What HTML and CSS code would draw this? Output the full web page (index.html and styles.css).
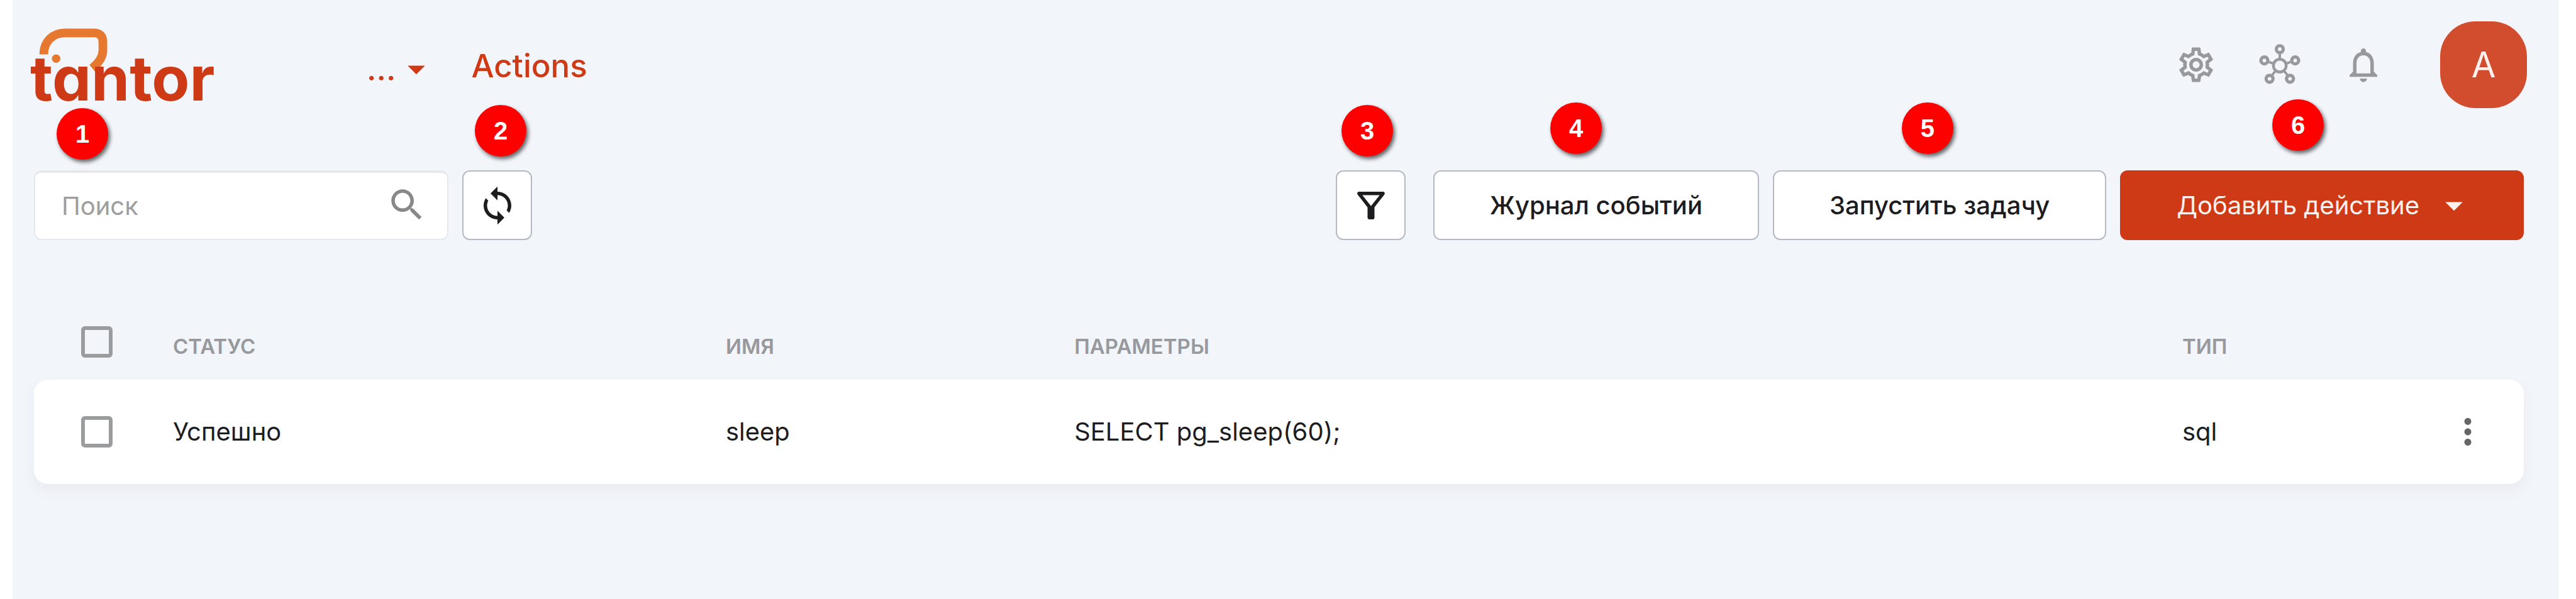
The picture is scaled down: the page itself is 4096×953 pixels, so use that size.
FILE: index.html
```html
<!DOCTYPE html>
<html lang="ru">
<head>
<meta charset="utf-8">
<meta name="viewport" content="width=device-width, initial-scale=1">
<title>Actions</title>
<link rel="stylesheet" href="styles.css">
</head>
<body>
<div class="app">
  <header class="header">
    <a class="logo" href="#" aria-label="tantor">
      <svg class="logo-art" viewBox="160 143 944 379" aria-hidden="true">
        <path class="logo-head" d="M227 278C227 212 272 167 338 167H488Q533 168 533 214V258C533 295 512 322 478 350"/>
        <circle class="logo-eye" cx="291" cy="300" r="22"/>
        <text class="logo-word" x="157" y="517">tantor</text>
      </svg>
    </a>
    <nav class="crumbs">
      <button class="crumb-menu" type="button" aria-label="Открыть путь">
        <span>...</span>
        <svg class="icon" viewBox="0 0 24 24"><path d="m7 10 5 5 5-5z"/></svg>
      </button>
      <a class="crumb" href="#">Actions</a>
    </nav>
    <div class="tools">
      <button class="tool" type="button" aria-label="Настройки">
        <svg class="icon" viewBox="0 0 24 24"><path d="M19.43 12.98c.04-.32.07-.64.07-.98s-.03-.66-.07-.98l2.11-1.65c.19-.15.24-.42.12-.64l-2-3.46c-.09-.16-.26-.25-.44-.25-.06 0-.12.01-.17.03l-2.49 1c-.52-.4-1.08-.73-1.69-.98l-.38-2.65C14.46 2.18 14.25 2 14 2h-4c-.25 0-.46.18-.49.42l-.38 2.65c-.61.25-1.17.59-1.69.98l-2.49-1c-.06-.02-.12-.03-.18-.03-.17 0-.34.09-.43.25l-2 3.46c-.13.22-.07.49.12.64l2.11 1.65c-.04.32-.07.65-.07.98s.03.66.07.98l-2.11 1.65c-.19.15-.24.42-.12.64l2 3.46c.09.16.26.25.44.25.06 0 .12-.01.17-.03l2.49-1c.52.4 1.08.73 1.69.98l.38 2.65c.03.24.24.42.49.42h4c.25 0 .46-.18.49-.42l.38-2.65c.61-.25 1.17-.59 1.69-.98l2.49 1c.06.02.12.03.18.03.17 0 .34-.09.43-.25l2-3.46c.12-.22.07-.49-.12-.64zm-1.98-1.71c.04.31.05.52.05.73s-.02.43-.05.73l-.14 1.13.89.7 1.08.84-.7 1.21-1.27-.51-1.04-.42-.9.68c-.43.32-.84.56-1.25.73l-1.06.43-.16 1.13-.2 1.35h-1.4l-.19-1.35-.16-1.13-1.06-.43c-.43-.18-.83-.41-1.23-.71l-.91-.7-1.06.43-1.27.51-.7-1.21 1.08-.84.89-.7-.14-1.13c-.03-.31-.05-.54-.05-.74s.02-.43.05-.73l.14-1.13-.89-.7-1.08-.84.7-1.21 1.27.51 1.04.42.9-.68c.43-.32.84-.56 1.25-.73l1.06-.43.16-1.13.2-1.35h1.39l.19 1.35.16 1.13 1.06.43c.43.18.83.41 1.23.71l.91.7 1.06-.43 1.27-.51.7 1.21-1.07.85-.89.7zM12 8c-2.21 0-4 1.79-4 4s1.79 4 4 4 4-1.79 4-4-1.79-4-4-4m0 6c-1.1 0-2-.9-2-2s.9-2 2-2 2 .9 2 2-.9 2-2 2"/></svg>
      </button>
      <button class="tool" type="button" aria-label="Узлы">
        <svg class="icon icon-line" viewBox="0 0 24 24">
          <circle cx="12" cy="12.5" r="3.7" stroke-width="1.6"/>
          <g stroke-width="1.9">
            <circle cx="12" cy="3" r="2"/><circle cx="3.1" cy="9.5" r="2"/><circle cx="20.9" cy="9.5" r="2"/><circle cx="6.1" cy="20.1" r="2"/><circle cx="17.9" cy="20.1" r="2"/>
          </g>
          <path stroke-width="1.4" d="M12 5.5V9M5.8 10.4l2.8 1M18.2 10.4l-2.8 1M7.7 17.8l1.9-2.3M16.3 17.8l-1.9-2.3"/>
        </svg>
      </button>
      <button class="tool" type="button" aria-label="Уведомления">
        <svg class="icon" viewBox="0 0 24 24"><path d="M12 22c1.1 0 2-.9 2-2h-4c0 1.1.9 2 2 2m6-6v-5c0-3.07-1.63-5.64-4.5-6.32V4c0-.83-.67-1.5-1.5-1.5s-1.5.67-1.5 1.5v.68C7.64 5.36 6 7.92 6 11v5l-2 2v1h16v-1zm-2 1H8v-6c0-2.48 1.51-4.5 4-4.5s4 2.02 4 4.5z"/></svg>
      </button>
      <button class="avatar" type="button">A</button>
    </div>
  </header>

  <main class="main">
    <div class="toolbar">
      <div class="slot search">
        <input class="search-input" type="text" placeholder="Поиск" aria-label="Поиск">
        <svg class="icon search-icon" viewBox="0 0 24 24"><path d="M15.5 14h-.79l-.28-.27C15.41 12.59 16 11.11 16 9.5 16 5.91 13.09 3 9.5 3S3 5.91 3 9.5 5.91 16 9.5 16c1.61 0 3.09-.59 4.23-1.57l.27.28v.79l5 4.99L20.49 19zm-6 0C7.01 14 5 11.99 5 9.5S7.01 5 9.5 5 14 7.01 14 9.5 11.99 14 9.5 14"/></svg>
        <span class="badge badge-1">1</span>
      </div>
      <div class="slot">
        <button class="btn btn-icon" type="button" aria-label="Обновить">
          <svg class="icon" viewBox="0 0 24 24"><path d="M12 4V1L8 5l4 4V6c3.31 0 6 2.69 6 6 0 1.01-.25 1.97-.7 2.8l1.46 1.46C19.54 15.03 20 13.57 20 12c0-4.42-3.58-8-8-8m0 14c-3.31 0-6-2.69-6-6 0-1.01.25-1.97.7-2.8L5.24 7.74C4.46 8.97 4 10.43 4 12c0 4.42 3.58 8 8 8v3l4-4-4-4z"/></svg>
        </button>
        <span class="badge badge-2">2</span>
      </div>
      <div class="slot slot-filter">
        <button class="btn btn-icon" type="button" aria-label="Фильтр">
          <svg class="icon" viewBox="0 0 24 24"><path d="M7 6h10l-5.01 6.3zm-2.75-.39C6.27 8.2 10 13 10 13v6c0 .55.45 1 1 1h2c.55 0 1-.45 1-1v-6s3.72-4.8 5.74-7.39c.51-.66.04-1.61-.79-1.61H5.04c-.83 0-1.3.95-.79 1.61"/></svg>
        </button>
        <span class="badge badge-3">3</span>
      </div>
      <div class="slot">
        <button class="btn" type="button">Журнал событий</button>
        <span class="badge badge-4">4</span>
      </div>
      <div class="slot">
        <button class="btn" type="button">Запустить задачу</button>
        <span class="badge badge-5">5</span>
      </div>
      <div class="slot">
        <button class="btn btn-primary" type="button">Добавить действие
          <svg class="icon" viewBox="0 0 24 24"><path d="m7 10 5 5 5-5z"/></svg>
        </button>
        <span class="badge badge-6">6</span>
      </div>
    </div>

    <table class="table">
      <colgroup>
        <col class="col-check"><col class="col-status"><col class="col-name"><col class="col-params"><col><col class="col-menu">
      </colgroup>
      <thead>
        <tr>
          <td class="cell-check"><input class="check" type="checkbox" aria-label="Выбрать все"></td>
          <th scope="col">СТАТУС</th>
          <th scope="col">ИМЯ</th>
          <th scope="col">ПАРАМЕТРЫ</th>
          <th scope="col">ТИП</th>
          <td></td>
        </tr>
      </thead>
      <tbody>
        <tr>
          <td class="cell-check"><input class="check" type="checkbox" aria-label="Выбрать sleep"></td>
          <td>Успешно</td>
          <td>sleep</td>
          <td>SELECT pg_sleep(60);</td>
          <td>sql</td>
          <td class="cell-menu">
            <button class="row-menu" type="button" aria-label="Меню">
              <svg class="icon" viewBox="0 0 24 24"><path d="M12 8c1.1 0 2-.9 2-2s-.9-2-2-2-2 .9-2 2 .9 2 2 2m0 2c-1.1 0-2 .9-2 2s.9 2 2 2 2-.9 2-2-.9-2-2-2m0 6c-1.1 0-2 .9-2 2s.9 2 2 2 2-.9 2-2-.9-2-2-2"/></svg>
            </button>
          </td>
        </tr>
      </tbody>
    </table>
  </main>
</div>
</body>
</html>
```
FILE: styles.css
```css
* {
  box-sizing: border-box;
}

body {
  margin: 0;
  background: #fff;
  color: #1d1d1f;
  font-family: Inter, "Liberation Sans", sans-serif;
  font-size: 40px;
  line-height: 60px;
}

button {
  margin: 0;
  padding: 0;
  border: 0;
  background: none;
  color: inherit;
  font: inherit;
  cursor: pointer;
}

a {
  color: inherit;
  text-decoration: none;
}

.app {
  min-height: 100vh;
  margin: 0 28px 0 20px;
  background: #f2f5fa;
}

.icon {
  display: block;
  flex: none;
  width: 66px;
  height: 66px;
  fill: currentColor;
}

.icon-line {
  fill: none;
  stroke: currentColor;
}

/* Header */

.header {
  display: flex;
  align-items: center;
  padding: 34px 50px 0 29px;
}

.logo {
  display: block;
  flex: none;
  width: 290px;
}

.logo-art {
  display: block;
  width: 100%;
  overflow: visible;
}

.logo-head {
  fill: none;
  stroke: #e6792f;
  stroke-width: 45;
}

.logo-eye {
  fill: #e6792f;
}

.logo-word {
  fill: #cf3a16;
  font-size: 320px;
  font-weight: 700;
  font-feature-settings: "cv11";
}

.crumbs {
  display: flex;
  align-items: center;
  gap: 54px;
  margin-left: 244px;
  padding-top: 4px;
  color: #cf3a16;
  font-size: 51px;
  font-weight: 500;
}

.crumb-menu {
  display: flex;
  align-items: center;
  padding-top: 10px;
}

.tools {
  display: flex;
  align-items: center;
  gap: 67px;
  margin-left: auto;
}

.tool {
  color: #97999d;
}

.avatar {
  width: 138px;
  height: 138px;
  margin-left: 22px;
  border-radius: 56px;
  background: #d24d2e;
  color: #fdf0ed;
  font-size: 56px;
  font-weight: 400;
}

/* Toolbar */

.main {
  padding: 99px 55px 0 34px;
}

.toolbar {
  display: flex;
  gap: 22px;
}

.slot {
  position: relative;
}

.slot-filter {
  margin-left: auto;
  margin-right: 22px;
}

.search {
  width: 659px;
}

.search-input {
  display: block;
  width: 100%;
  height: 111px;
  padding: 0 110px 0 42px;
  border: 2px solid #e6e8ed;
  border-top-width: 4px;
  border-radius: 12px;
  background: #fff;
  color: inherit;
  font: inherit;
}

.search-input::placeholder {
  color: #9e9e9e;
  opacity: 1;
}

.search-icon {
  position: absolute;
  top: 22px;
  right: 33px;
  color: #888;
}

.btn {
  display: flex;
  align-items: center;
  justify-content: center;
  height: 111px;
  padding: 0 88px;
  border: 2px solid #b5b9c4;
  border-radius: 12px;
  background: #fff;
  font-weight: 500;
  white-space: nowrap;
}

.btn-icon {
  width: 111px;
  padding: 0;
}

.btn-primary {
  gap: 22px;
  padding: 0 76px 0 88px;
  border-color: #cf3a16;
  background: #cf3a16;
  color: #fdf0ed;
  font-weight: 400;
}

.badge {
  position: absolute;
  width: 82px;
  height: 82px;
  border-radius: 50%;
  background: #f00;
  box-shadow: 3px 4px 6px rgba(0, 0, 0, 0.6);
  color: #fff;
  font: bold 40px/82px "Liberation Sans", sans-serif;
  text-align: center;
}

.badge-1 {
  top: -99px;
  left: 36px;
}

.badge-2 {
  top: -104px;
  left: 20px;
}

.badge-3 {
  top: -104px;
  left: 9px;
}

.badge-4 {
  top: -108px;
  left: 186px;
}

.badge-5 {
  top: -108px;
  left: 205px;
}

.badge-6 {
  top: -113px;
  left: 242px;
}

/* Table */

.table {
  width: 100%;
  margin-top: 102px;
  border-spacing: 0;
  table-layout: fixed;
}

.col-check {
  width: 221px;
}

.col-status {
  width: 22.2%;
}

.col-name {
  width: 14%;
}

.col-params {
  width: 44.5%;
}

.col-menu {
  width: 178px;
}

.table th,
.table td {
  padding: 0;
  text-align: left;
}

.table thead tr {
  height: 120px;
}

.table th {
  padding-top: 14px;
  color: #97999d;
  font-size: 33px;
  font-weight: 600;
}

.table tbody tr {
  height: 166px;
  border-radius: 22px;
  box-shadow: 0 10px 22px rgba(60, 80, 70, 0.06);
}

.table tbody td {
  background: #fff;
}

.table tbody td:first-child {
  border-radius: 22px 0 0 22px;
}

.table tbody td:last-child {
  border-radius: 0 22px 22px 0;
}

.table .cell-check {
  padding-left: 75px;
}

.check {
  display: block;
  width: 50px;
  height: 50px;
  margin: 0;
  border: 6px solid #9b9c9e;
  border-radius: 6px;
  appearance: none;
}

.check:checked {
  background: #cf3a16;
}

.row-menu {
  display: block;
  margin: 0 auto;
  color: #666;
}
```
